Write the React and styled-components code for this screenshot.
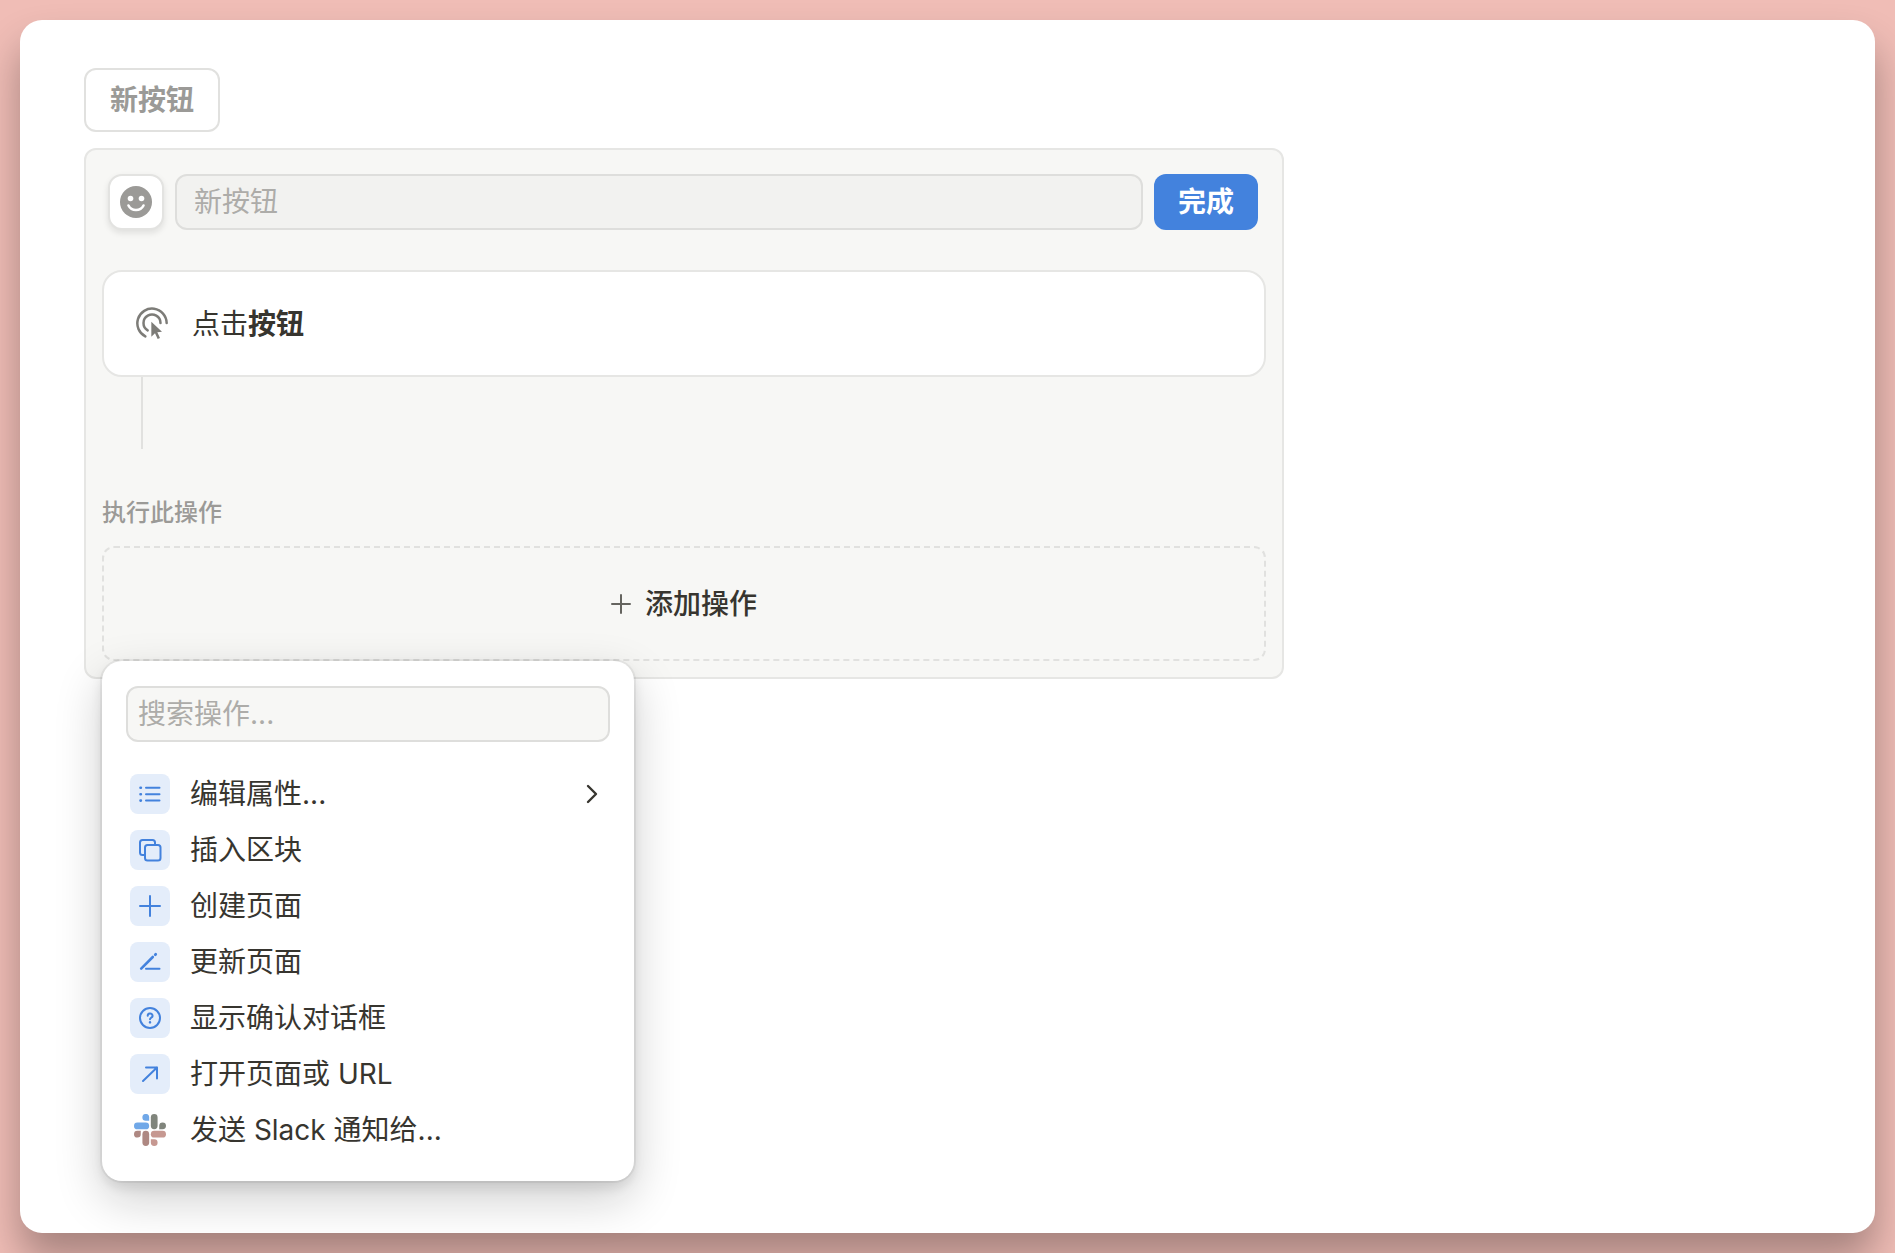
import React, { useState } from 'react';
import styled, { createGlobalStyle } from 'styled-components';

const GlobalStyle = createGlobalStyle`
  * {
    box-sizing: border-box;
  }
  body {
    margin: 0;
    background: #f0bdb6;
    color: #37352f;
    font-family: Inter, "Noto Sans CJK SC", sans-serif;
    font-size: 28px;
    line-height: 40px;
  }
  button, input {
    font: inherit;
    color: inherit;
    margin: 0;
  }
`;

const Page = styled.div`
  min-height: 100vh;
  padding: 20px;
  display: flex;
`;

const Sheet = styled.main`
  flex: 1;
  padding: 48px 64px;
  border-radius: 22px;
  background: #fff;
  box-shadow: 0 26px 40px rgba(0, 0, 0, 0.31);
`;

const PreviewButton = styled.button`
  display: block;
  height: 64px;
  padding: 0 24px;
  border: 2px solid #e1e1df;
  border-radius: 12px;
  background: #fff;
  color: #9b9a97;
  font-weight: 700;
  cursor: pointer;
`;

const Panel = styled.section`
  max-width: 1200px;
  margin-top: 16px;
  padding: 24px 16px 16px;
  border: 2px solid #e6e6e4;
  border-radius: 12px;
  background: #f7f7f5;
`;

const Header = styled.div`
  display: flex;
  gap: 11px;
  padding: 0 8px 0 6px;
`;

const EmojiButton = styled.button`
  display: flex;
  align-items: center;
  justify-content: center;
  width: 56px;
  height: 56px;
  padding: 0;
  border: 2px solid #e3e3e1;
  border-radius: 14px;
  background: #fff;
  box-shadow: 0 3px 6px rgba(15, 15, 15, 0.1);
  cursor: pointer;
`;

const TextInput = styled.input`
  flex: 1;
  min-width: 0;
  height: 56px;
  padding: 0 17px;
  border: 2px solid #dededc;
  border-radius: 12px;
  background: #f2f2f0;
  outline: none;
  &::placeholder {
    color: #adaca9;
    opacity: 1;
  }
`;

const SearchInput = styled(TextInput)`
  display: block;
  width: 100%;
  padding: 0 10px;
  background: #f7f7f5;
`;

const DoneButton = styled.button`
  height: 56px;
  padding: 0 24px;
  border: 0;
  border-radius: 12px;
  background: #4382dd;
  color: #fff;
  font-weight: 700;
  cursor: pointer;
`;

const TriggerCard = styled.div`
  display: flex;
  align-items: center;
  gap: 24px;
  height: 107px;
  margin-top: 40px;
  padding: 0 32px;
  border: 2px solid #e6e6e4;
  border-radius: 20px;
  background: #fff;
  b {
    font-weight: 700;
  }
`;

const Connector = styled.div`
  width: 2px;
  height: 72px;
  margin-left: 39px;
  background: #e1e1df;
`;

const SectionTitle = styled.h2`
  margin: 46px 0 15px;
  color: #9b9a97;
  font-size: 24px;
  font-weight: 500;
  line-height: 36px;
`;

const AddArea = styled.div`
  position: relative;
`;

const AddButton = styled.button`
  display: flex;
  align-items: center;
  justify-content: center;
  gap: 14px;
  width: 100%;
  height: 115px;
  border: 2px dashed #e1e1df;
  border-radius: 12px;
  background: transparent;
  font-weight: 500;
  cursor: pointer;
`;

const Popover = styled.div`
  position: absolute;
  z-index: 1;
  top: 100%;
  left: 0;
  width: 532px;
  padding: 25px 24px 23px;
  border-radius: 20px;
  background: #fff;
  box-shadow:
    0 0 0 2px rgba(15, 15, 15, 0.05),
    0 6px 12px rgba(15, 15, 15, 0.1),
    0 18px 48px rgba(15, 15, 15, 0.2);
`;

const ActionList = styled.ul`
  margin: 24px 0 0;
  padding: 0;
  list-style: none;
`;

const ActionButton = styled.button`
  display: flex;
  align-items: center;
  gap: 20px;
  width: 100%;
  height: 56px;
  padding: 0 12px 0 4px;
  border: 0;
  background: transparent;
  text-align: left;
  cursor: pointer;
`;

const ActionIcon = styled.span`
  display: flex;
  align-items: center;
  justify-content: center;
  width: 40px;
  height: 40px;
  border-radius: 8px;
  background: ${(props) => (props.$plain ? 'transparent' : '#e4edfa')};
`;

const ActionName = styled.span`
  flex: 1;
`;

// shared look of the small blue line icons
const LineIcon = styled.svg.attrs({ viewBox: '0 0 24 24', width: 24, height: 24, 'aria-hidden': true })`
  fill: none;
  stroke: #4382dd;
  stroke-width: 2;
  stroke-linecap: round;
  stroke-linejoin: round;
`;

const SmileIcon = () => (
  <svg width="32" height="32" viewBox="0 0 32 32" aria-hidden="true">
    <circle cx="16" cy="16" r="16" fill="#9b9a97" />
    <circle cx="10.5" cy="12.5" r="2.8" fill="#fff" />
    <circle cx="21.5" cy="12.5" r="2.8" fill="#fff" />
    <path d="M8.500 19.500c1.600 3.200 4.300 4.500 7.500 4.500s5.900-1.300 7.500-4.500" fill="none" stroke="#fff" strokeWidth="2.600" strokeLinecap="round" />
  </svg>
);

const ClickIcon = () => (
  <svg width="32" height="33" viewBox="0 0 96 99" aria-hidden="true">
    <g fill="none" stroke="#7d7c78" strokeWidth="7.500" strokeLinecap="round">
      <path d="M28 88A44 44 0 1 1 92 48" />
      <path d="M35 70A25.500 25.500 0 1 1 73.500 48" />
    </g>
    <path d="M46 44v45l11-10 8 17 7-3-8-17 14-2z" fill="#7d7c78" />
  </svg>
);

const PlusIcon = () => (
  <svg width="20" height="20" viewBox="0 0 20 20" fill="none" stroke="#65645f" strokeWidth="2" strokeLinecap="round" aria-hidden="true">
    <path d="M10 1v18M1 10h18" />
  </svg>
);

const ChevronIcon = () => (
  <svg width="12" height="20" viewBox="0 0 12 20" fill="none" stroke="#37352f" strokeWidth="2.400" strokeLinecap="round" strokeLinejoin="round" aria-hidden="true">
    <path d="M2 2l8 8-8 8" />
  </svg>
);

const ListIcon = () => (
  <LineIcon>
    <path d="M8 5.800h13.500M8 12.200h13.500M8 18.600h13.500" />
    <path d="M2.500 5.800h.4M2.500 12.200h.4M2.500 18.600h.4" strokeWidth="2.600" />
  </LineIcon>
);

const CopyIcon = () => (
  <LineIcon>
    <rect x="7" y="7" width="15.500" height="15.500" rx="2.500" />
    <path d="M7 17H4.500a2.500 2.500 0 0 1-2.500-2.500V4.500A2.500 2.500 0 0 1 4.500 2h10A2.500 2.500 0 0 1 17 4.500V7" />
  </LineIcon>
);

const CreateIcon = () => (
  <LineIcon>
    <path d="M12 2v20M2 12h20" />
  </LineIcon>
);

const EditIcon = () => (
  <LineIcon>
    <path d="M3.200 18.600L14.800 7" strokeWidth="2.600" />
    <path d="M17.300 4.700l.4-.4" strokeWidth="2.800" />
    <path d="M8 18.800h13.500" />
  </LineIcon>
);

const QuestionIcon = () => (
  <LineIcon>
    <circle cx="12" cy="12" r="10" />
    <path d="M9.700 9.700a2.400 2.200 0 1 1 3.600 1.900c-.9.500-1.300.9-1.300 1.700" />
    <path d="M12 16.300v.1" strokeWidth="2.400" />
  </LineIcon>
);

const OpenIcon = () => (
  <LineIcon>
    <path d="M5 19L19 5.500M8 5.500h11v11" />
  </LineIcon>
);

const SlackIcon = () => (
  <svg width="32" height="32" viewBox="0 0 97 97" aria-hidden="true">
    <g fill="#70a8e8">
      <path d="M46 20.500H36A10.300 10.300 0 1 1 46 10z" />
      <rect x="0" y="26" width="46" height="20.500" rx="10.250" />
    </g>
    <g fill="#80857c">
      <rect x="51" y="0" width="20.500" height="46" rx="10.250" />
      <path d="M76.500 46V36A10.250 10.250 0 1 1 86.750 46z" />
    </g>
    <g fill="#c69891">
      <rect x="51" y="51" width="46" height="20.500" rx="10.250" />
      <path d="M51 76.500H61A10.250 10.250 0 1 1 51 86.750z" />
    </g>
    <g fill="#ae8882">
      <rect x="25.500" y="51" width="20.500" height="46" rx="10.250" />
      <path d="M20.500 51V61A10.250 10.250 0 1 1 10.250 51z" />
    </g>
  </svg>
);

const actions = [
  { id: 'props', name: '编辑属性...', icon: <ListIcon />, submenu: true },
  { id: 'insert', name: '插入区块', icon: <CopyIcon /> },
  { id: 'create', name: '创建页面', icon: <CreateIcon /> },
  { id: 'update', name: '更新页面', icon: <EditIcon /> },
  { id: 'confirm', name: '显示确认对话框', icon: <QuestionIcon /> },
  { id: 'open', name: '打开页面或 URL', icon: <OpenIcon /> },
  { id: 'slack', name: '发送 Slack 通知给...', icon: <SlackIcon />, plain: true },
];

function ActionMenu() {
  const [query, setQuery] = useState('');
  const found = actions.filter((action) => action.name.includes(query));
  return (
    <Popover>
      <SearchInput
        aria-label="搜索操作"
        placeholder="搜索操作..."
        value={query}
        onChange={(e) => setQuery(e.target.value)}
      />
      <ActionList>
        {found.map((action) => (
          <li key={action.id}>
            <ActionButton type="button">
              <ActionIcon $plain={action.plain}>{action.icon}</ActionIcon>
              <ActionName>{action.name}</ActionName>
              {action.submenu && <ChevronIcon />}
            </ActionButton>
          </li>
        ))}
      </ActionList>
    </Popover>
  );
}

function App() {
  const [name, setName] = useState('');
  const [menuOpen, setMenuOpen] = useState(true);
  return (
    <>
      <GlobalStyle />
      <Page>
        <Sheet>
          <PreviewButton type="button">{name || '新按钮'}</PreviewButton>
          <Panel>
            <Header>
              <EmojiButton type="button" aria-label="图标">
                <SmileIcon />
              </EmojiButton>
              <TextInput
                aria-label="按钮名称"
                placeholder="新按钮"
                value={name}
                onChange={(e) => setName(e.target.value)}
              />
              <DoneButton type="button">完成</DoneButton>
            </Header>
            <TriggerCard>
              <ClickIcon />
              <span>点击<b>按钮</b></span>
            </TriggerCard>
            <Connector />
            <SectionTitle>执行此操作</SectionTitle>
            <AddArea>
              <AddButton type="button" aria-expanded={menuOpen} onClick={() => setMenuOpen(!menuOpen)}>
                <PlusIcon />
                添加操作
              </AddButton>
              {menuOpen && <ActionMenu />}
            </AddArea>
          </Panel>
        </Sheet>
      </Page>
    </>
  );
}

export default App;
